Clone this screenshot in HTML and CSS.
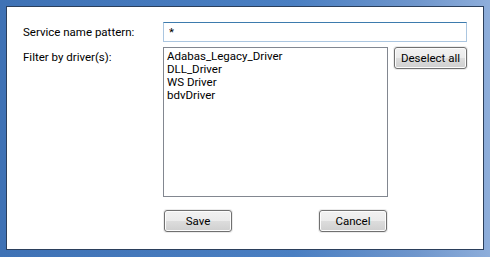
FILE: index.html
```html
<html>
  <head>
    <title>Services</title>
    <link rel="stylesheet" href="styles.css">
  </head>
  <body>
    <div class="ventana">
      <form class="formulario" action="">
        <label class="etiqueta" for="patron">Service name pattern:</label>
        <input type="text" id="patron" class="campo" value="*">

        <span class="etiqueta">Filter by driver(s):</span>
        <ul class="lista" id="drivers">
          <li>Adabas_Legacy_Driver</li>
          <li>DLL_Driver</li>
          <li>WS Driver</li>
          <li>bdvDriver</li>
        </ul>
        <div class="lateral">
          <button type="button" class="boton boton-ancho">Deselect all</button>
        </div>

        <div class="acciones">
          <button type="button" class="boton">Save</button>
          <button type="button" class="boton">Cancel</button>
        </div>
      </form>
    </div>
  </body>
</html>
```

FILE: styles.css
```css
body{
  margin:0;
  width:490px;
  height:257px;
  box-sizing:border-box;
  padding:6px 6px 7px 6px;
  background:linear-gradient(90deg,#3f72b5 0%,#4a7fc2 60%,#6f96cc 85%,#8eaedb 100%);
  font-family:Roboto,"Open Sans",sans-serif;
  font-size:11.5px;
  color:#000;
}

.ventana{
  height:100%;
  box-sizing:border-box;
  border:1px solid #2b3f5c;
  background:#fff;
  padding:15px 0 0 16px;
}

.formulario{
  display:grid;
  grid-template-columns:134px 225px 73px;
  column-gap:6px;
  row-gap:5px;
  margin:0;
}

.etiqueta{
  line-height:20px;
}

.campo{
  grid-column:2 / span 2;
  height:20px;
  box-sizing:border-box;
  border:1px solid #abc6e0;
  border-top-color:#3d7bad;
  padding:0 5px;
  font-family:inherit;
  font-size:inherit;
  outline:none;
}

.lista{
  list-style:none;
  margin:0;
  padding:2px 3px;
  height:150px;
  box-sizing:border-box;
  border:1px solid #828790;
}
.lista li{
  line-height:13px;
}

.lateral{
  display:flex;
  align-items:flex-start;
}

.acciones{
  grid-column:2;
  display:flex;
  justify-content:space-between;
  padding:0 1px;
  margin-top:8px;
}

.boton{
  width:68px;
  height:22px;
  border:1px solid #707070;
  border-radius:3px;
  box-shadow:inset 0 0 0 1px #fcfcfc, 0 0 0 1px #ececec;
  background:linear-gradient(#f2f2f2 0%,#ebebeb 50%,#dddddd 50%,#cfcfcf 100%);
  font-family:inherit;
  font-size:inherit;
  color:#000;
  padding:0;
}
.boton-ancho{
  width:73px;
}
```
